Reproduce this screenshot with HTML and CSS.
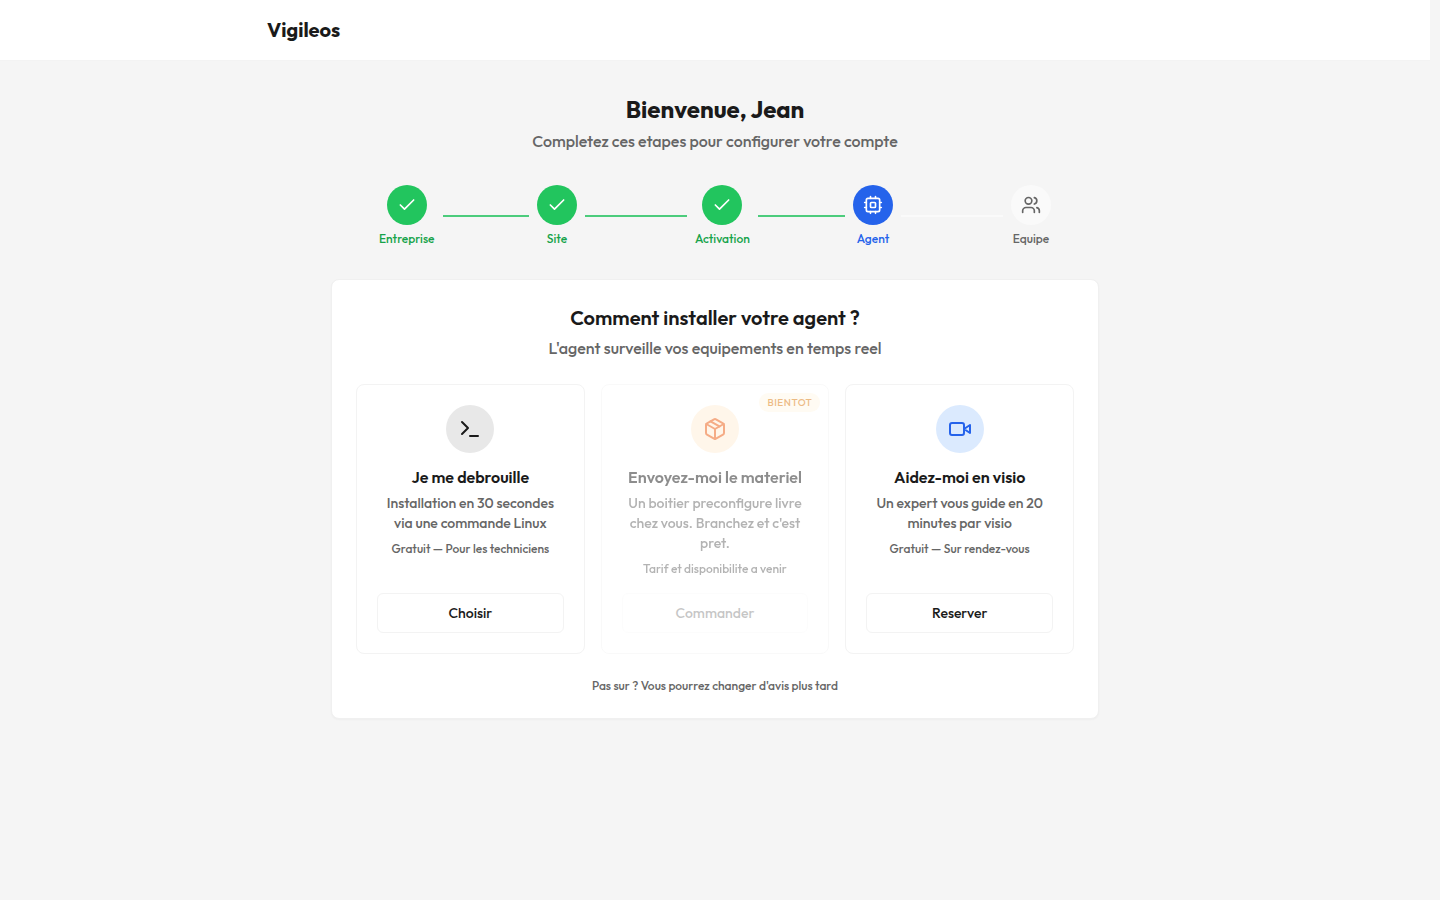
FILE: index.html
```html
<!DOCTYPE html>
<html lang="fr">
<head>
  <meta charset="UTF-8" />
  <meta name="viewport" content="width=device-width, initial-scale=1.0" />
  <title>Vigileos</title>
  <link rel="stylesheet" href="styles.css">
</head>
<body>
  <header class="topbar">
    <div class="topbar-inner">
      <span class="logo">Vigileos</span>
    </div>
  </header>

  <main class="content">
    <h1>Bienvenue, Jean</h1>
    <p class="subtitle">Completez ces etapes pour configurer votre compte</p>

    <ol class="steps">
      <li class="step done">
        <div class="step-body">
          <span class="step-circle"><svg class="icon" viewBox="0 0 24 24"><path d="M20 6 9 17l-5-5"/></svg></span>
          <span class="step-label">Entreprise</span>
        </div>
        <span class="step-line"></span>
      </li>
      <li class="step done">
        <div class="step-body">
          <span class="step-circle"><svg class="icon" viewBox="0 0 24 24"><path d="M20 6 9 17l-5-5"/></svg></span>
          <span class="step-label">Site</span>
        </div>
        <span class="step-line"></span>
      </li>
      <li class="step done">
        <div class="step-body">
          <span class="step-circle"><svg class="icon" viewBox="0 0 24 24"><path d="M20 6 9 17l-5-5"/></svg></span>
          <span class="step-label">Activation</span>
        </div>
        <span class="step-line"></span>
      </li>
      <li class="step current" aria-current="step">
        <div class="step-body">
          <span class="step-circle">
            <svg class="icon" viewBox="0 0 24 24">
              <rect x="4" y="4" width="16" height="16" rx="2"/>
              <rect x="9" y="9" width="6" height="6" rx="1"/>
              <path d="M15 2v2M15 20v2M2 15h2M2 9h2M20 15h2M20 9h2M9 2v2M9 20v2"/>
            </svg>
          </span>
          <span class="step-label">Agent</span>
        </div>
        <span class="step-line"></span>
      </li>
      <li class="step">
        <div class="step-body">
          <span class="step-circle">
            <svg class="icon" viewBox="0 0 24 24">
              <path d="M16 21v-2a4 4 0 0 0-4-4H6a4 4 0 0 0-4 4v2"/>
              <circle cx="9" cy="7" r="4"/>
              <path d="M22 21v-2a4 4 0 0 0-3-3.87M16 3.13a4 4 0 0 1 0 7.75"/>
            </svg>
          </span>
          <span class="step-label">Equipe</span>
        </div>
      </li>
    </ol>

    <section class="panel">
      <h2>Comment installer votre agent ?</h2>
      <p class="subtitle">L'agent surveille vos equipements en temps reel</p>

      <div class="options">
        <article class="option">
          <span class="option-icon dark">
            <svg class="icon" viewBox="0 0 24 24"><path d="m4 17 6-6-6-6M12 19h8"/></svg>
          </span>
          <h3>Je me debrouille</h3>
          <p class="option-text">Installation en 30 secondes via une commande Linux</p>
          <p class="note">Gratuit — Pour les techniciens</p>
          <button type="button">Choisir</button>
        </article>

        <article class="option disabled">
          <span class="badge">Bientot</span>
          <span class="option-icon orange">
            <svg class="icon" viewBox="0 0 24 24">
              <path d="m7.5 4.27 9 5.15"/>
              <path d="M21 8a2 2 0 0 0-1-1.73l-7-4a2 2 0 0 0-2 0l-7 4A2 2 0 0 0 3 8v8a2 2 0 0 0 1 1.73l7 4a2 2 0 0 0 2 0l7-4A2 2 0 0 0 21 16Z"/>
              <path d="m3.3 7 8.7 5 8.7-5M12 22V12"/>
            </svg>
          </span>
          <h3>Envoyez-moi le materiel</h3>
          <p class="option-text">Un boitier preconfigure livre chez vous. Branchez et c'est pret.</p>
          <p class="note">Tarif et disponibilite a venir</p>
          <button type="button" disabled>Commander</button>
        </article>

        <article class="option">
          <span class="option-icon blue">
            <svg class="icon" viewBox="0 0 24 24">
              <path d="m22 8-6 4 6 4V8Z"/>
              <rect x="2" y="6" width="14" height="12" rx="2"/>
            </svg>
          </span>
          <h3>Aidez-moi en visio</h3>
          <p class="option-text">Un expert vous guide en 20 minutes par visio</p>
          <p class="note">Gratuit — Sur rendez-vous</p>
          <button type="button">Reserver</button>
        </article>
      </div>

      <p class="note">Pas sur ? Vous pourrez changer d'avis plus tard</p>
    </section>
  </main>
</body>
</html>
```
FILE: styles.css
```css
* {
  box-sizing: border-box;
}
body {
  margin: 0;
  padding-right: 10px;
  background-color: #f5f5f5;
  color: #1a1a1a;
  font-family: Outfit, Lato, sans-serif;
  font-size: 16px;
  font-weight: 500;
  line-height: 24px;
}
h1, h2, h3, p, ol {
  margin: 0;
  padding: 0;
}
.topbar {
  background: #fff;
  border-bottom: 1px solid #f3f3f3;
}
.topbar-inner {
  max-width: 896px;
  margin: 0 auto;
  padding: 16px 0;
}
.logo {
  display: block;
  font-size: 20px;
  line-height: 28px;
  font-weight: 700;
}
.content {
  max-width: 768px;
  margin: 0 auto;
  padding: 32px 0;
  text-align: center;
}
h1 {
  font-size: 24px;
  line-height: 32px;
  font-weight: 700;
}
h2 {
  font-size: 20px;
  line-height: 28px;
  font-weight: 600;
}
.subtitle {
  margin-top: 4px;
  color: #666;
}
.icon {
  width: 24px;
  height: 24px;
  fill: none;
  stroke: currentColor;
  stroke-width: 2;
  stroke-linecap: round;
  stroke-linejoin: round;
}

/* steps */
.steps {
  display: flex;
  max-width: 672px;
  margin: 32px auto;
  list-style: none;
}
.step {
  display: flex;
  flex: 1;
  align-items: center;
  color: #666;
}
.step:last-child {
  flex: none;
}
.step-body {
  display: flex;
  flex-direction: column;
  align-items: center;
  gap: 6px;
}
.step-circle {
  display: flex;
  align-items: center;
  justify-content: center;
  width: 40px;
  height: 40px;
  border-radius: 50%;
  background: #fafafa;
}
.step-circle .icon {
  width: 20px;
  height: 20px;
}
.step-label {
  font-size: 12px;
  line-height: 16px;
}
.step-line {
  flex: 1;
  height: 2px;
  margin: 0 8px;
  background: #fafafa;
}
.done {
  color: #16a34a;
}
.done .step-circle {
  background: #22c55e;
  color: #fff;
}
.done .step-line {
  background: #4ccc7c;
}
.current {
  color: #2563eb;
}
.current .step-circle {
  background: #2563eb;
  color: #fff;
}

/* panel */
.panel {
  padding: 24px;
  background: #fff;
  border: 1px solid #f0f0f0;
  border-radius: 8px;
  box-shadow: 0 1px 2px rgba(0,0,0,0.03);
}
.options {
  display: grid;
  grid-template-columns: repeat(3, 1fr);
  gap: 16px;
  margin: 24px 0;
}
.option {
  position: relative;
  display: flex;
  flex-direction: column;
  align-items: center;
  padding: 20px;
  border: 1px solid #f3f3f3;
  border-radius: 8px;
}
.option-icon {
  display: flex;
  align-items: center;
  justify-content: center;
  width: 48px;
  height: 48px;
  margin-bottom: 12px;
  border-radius: 50%;
}
.dark {
  background: #e8e8e8;
}
.orange {
  background: #ffedd5;
  color: #ea580c;
}
.blue {
  background: #dbeafe;
  color: #2563eb;
}
h3 {
  font-size: 16px;
  line-height: 24px;
  font-weight: 600;
}
.option-text {
  margin: 4px 0 8px;
  color: #666;
  font-size: 14px;
  line-height: 20px;
}
.note {
  color: #666;
  font-size: 12px;
  line-height: 16px;
}
button {
  width: 100%;
  height: 40px;
  margin-top: auto;
  background: #fff;
  border: 1px solid #f3f3f3;
  border-radius: 6px;
  color: #1a1a1a;
  font-family: inherit;
  font-size: 14px;
  font-weight: 500;
  cursor: pointer;
}
.option .note {
  margin-bottom: 16px;
}
.disabled {
  opacity: 0.5;
}
.disabled button {
  opacity: 0.5;
  cursor: default;
}
.badge {
  position: absolute;
  top: 8px;
  right: 8px;
  padding: 2px 8px;
  border-radius: 10px;
  background: #fff7e6;
  color: #d97706;
  font-size: 10px;
  line-height: 15px;
  letter-spacing: 0.5px;
  text-transform: uppercase;
}
```
